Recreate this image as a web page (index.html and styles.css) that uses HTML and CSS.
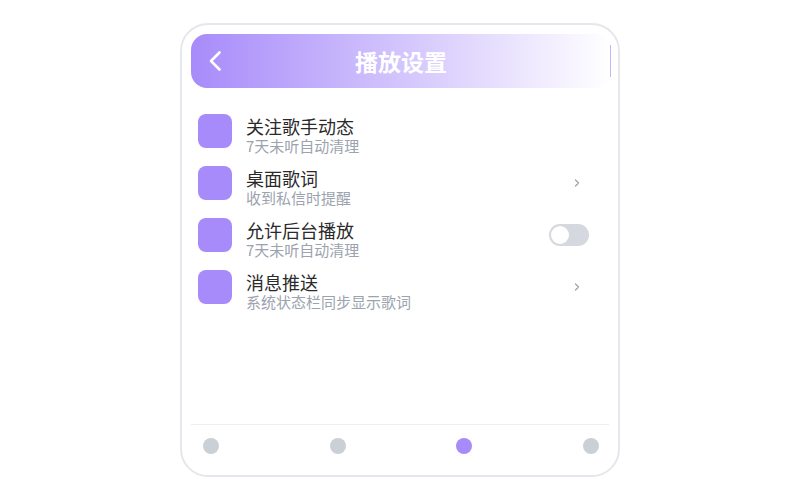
FILE: index.html
```html
<!DOCTYPE html>
<html lang="zh-CN">
<head>
    <meta charset="UTF-8">
    <meta name="viewport" content="width=device-width, initial-scale=1.0">
    <title>播放设置</title>
    <link rel="stylesheet" href="styles.css">
</head>
<body>
    <!-- Phone frame -->
    <div class="phone">

        <!-- Header bar -->
        <div class="header">
            <div class="back">
                <svg width="14" height="22" viewBox="0 0 14 22">
                    <path d="M11.5 2.5 L3 11 L11.5 19.5" fill="none" stroke="#fff" stroke-width="2.6" stroke-linecap="round" stroke-linejoin="round"/>
                </svg>
            </div>
            <h1 class="title">播放设置</h1>
            <div class="header-end"></div>
        </div>

        <!-- Settings list -->
        <div class="list">
            <div class="row">
                <div class="icon"></div>
                <div class="text">
                    <div class="name">关注歌手动态</div>
                    <div class="desc">7天未听自动清理</div>
                </div>
            </div>
            <div class="row">
                <div class="icon"></div>
                <div class="text">
                    <div class="name">桌面歌词</div>
                    <div class="desc">收到私信时提醒</div>
                </div>
                <div class="trail">
                    <svg class="arrow" width="6" height="8" viewBox="0 0 6 8">
                        <path d="M1.5 1 L4.5 4 L1.5 7" fill="none" stroke="#9ca3af" stroke-width="1.3" stroke-linecap="round" stroke-linejoin="round"/>
                    </svg>
                </div>
            </div>
            <div class="row">
                <div class="icon"></div>
                <div class="text">
                    <div class="name">允许后台播放</div>
                    <div class="desc">7天未听自动清理</div>
                </div>
                <div class="trail">
                    <div class="switch"><span class="knob"></span></div>
                </div>
            </div>
            <div class="row">
                <div class="icon"></div>
                <div class="text">
                    <div class="name">消息推送</div>
                    <div class="desc">系统状态栏同步显示歌词</div>
                </div>
                <div class="trail">
                    <svg class="arrow" width="6" height="8" viewBox="0 0 6 8">
                        <path d="M1.5 1 L4.5 4 L1.5 7" fill="none" stroke="#9ca3af" stroke-width="1.3" stroke-linecap="round" stroke-linejoin="round"/>
                    </svg>
                </div>
            </div>
        </div>

        <!-- Page dots -->
        <div class="dots">
            <span class="dot"></span>
            <span class="dot"></span>
            <span class="dot active"></span>
            <span class="dot"></span>
        </div>
    </div>
</body>
</html>
```

FILE: styles.css
```css
/* Page centers the phone frame */
body {
    margin: 0;
    height: 100vh;
    display: flex;
    align-items: center;
    justify-content: center;
    background-color: #ffffff;
    font-family: "Noto Sans CJK SC", "Noto Sans", sans-serif;
}

.phone {
    box-sizing: border-box;
    width: 440px;
    height: 454px;
    border: 2px solid #e6e7ec;
    border-radius: 28px;
    padding: 9px;
    display: flex;
    flex-direction: column;
    background-color: #fff;
}

/* Header with purple fade */
.header {
    height: 54px;
    border-radius: 16px;
    display: flex;
    align-items: center;
    margin-right: -2px;
    background: linear-gradient(90deg, #a78bfa, #ffffff);
}

.back {
    width: 40px;
    padding-left: 17px;
    box-sizing: border-box;
    display: flex;
    align-items: center;
}

.title {
    flex: 1;
    margin: 0;
    text-align: center;
    color: #fff;
    font-size: 23px;
    font-weight: bold;
}

.header-end {
    width: 40px;
    height: 32px;
    box-sizing: border-box;
    border-right: 1px solid #c4b5fd;
}

/* Settings rows */
.list {
    flex: 1;
    padding: 26px 20px 0 7px;
    display: flex;
    flex-direction: column;
    gap: 11px;
}

.row {
    display: flex;
    align-items: flex-start;
}

.icon {
    width: 34px;
    height: 34px;
    border-radius: 8px;
    background-color: #a78bfa;
    flex-shrink: 0;
}

.text {
    flex: 1;
    margin-left: 14px;
}

.name {
    font-size: 18px;
    line-height: 22px;
    padding-top: 1px;
    color: #2a2a2a;
}

.desc {
    font-size: 15px;
    line-height: 18px;
    color: #9ca3af;
}

.trail {
    height: 34px;
    display: flex;
    align-items: center;
}

.arrow {
    margin-right: 9px;
}

.switch {
    width: 40px;
    height: 22px;
    border-radius: 11px;
    background-color: #d5d8de;
    display: flex;
    align-items: center;
    padding-left: 2px;
    box-sizing: border-box;
}

.knob {
    width: 18px;
    height: 18px;
    border-radius: 50%;
    background-color: #fff;
}

/* Bottom page indicator */
.dots {
    border-top: 1px solid #eceef2;
    padding: 13px 10px 12px 12px;
    display: flex;
    justify-content: space-between;
}

.dot {
    width: 16px;
    height: 16px;
    border-radius: 50%;
    background-color: #cbd0d7;
}

.dot.active {
    background-color: #a78bfa;
}
```
